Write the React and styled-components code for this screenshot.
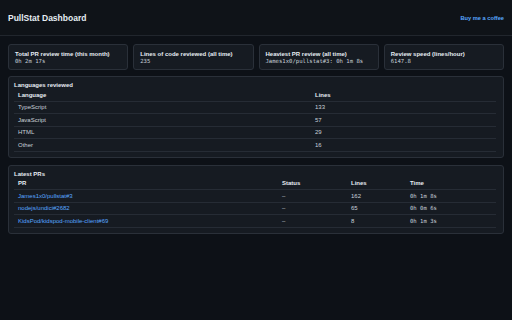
import React from 'react'
import styled, { createGlobalStyle } from 'styled-components'

const GlobalStyle = createGlobalStyle`
  html, body {
    margin: 0;
    padding: 0;
    background: #0d1117;
  }
  body {
    font-family: "Liberation Sans", Arial, sans-serif;
    color: #c9d1d9;
    width: 512px;
    height: 320px;
    overflow: hidden;
  }
`

const Header = styled.header`
  height: 35px;
  padding: 0 8px;
  display: flex;
  align-items: center;
  justify-content: space-between;
  border-bottom: 1px solid #21262d;
  background: #0f1318;
`

const Title = styled.h1`
  margin: 0;
  font-size: 8.5px;
  font-weight: 700;
  color: #e6edf3;
`

const CoffeeLink = styled.a`
  font-size: 5.7px;
  font-weight: 700;
  color: #58a6ff;
  text-decoration: none;
`

const Main = styled.main`
  padding: 8px;
  display: flex;
  flex-direction: column;
`

const Cards = styled.div`
  display: grid;
  grid-template-columns: repeat(4, 1fr);
  gap: 5px;
`

const Card = styled.div`
  background: #161b22;
  border: 1px solid #2a3039;
  border-radius: 3px;
  padding: 6px 6px 4px;
`

const CardLabel = styled.div`
  font-size: 6px;
  line-height: 7px;
  font-weight: 700;
  color: #e6edf3;
  white-space: nowrap;
`

const CardValue = styled.div`
  font-family: "DejaVu Sans Mono", "Liberation Mono", monospace;
  font-size: 5.6px;
  line-height: 7px;
  color: #c9d1d9;
  white-space: nowrap;
`

const Panel = styled.section`
  margin-top: ${p => p.$top}px;
  background: #161b22;
  border: 1px solid #2a3039;
  border-radius: 3px;
  padding: 4px 7px 5px 5px;
`

const PanelTitle = styled.h2`
  margin: 0;
  font-size: 6px;
  line-height: 8px;
  font-weight: 700;
  color: #e6edf3;
`

const Row = styled.div`
  display: grid;
  grid-template-columns: ${p => p.$cols};
  height: 12.5px;
  box-sizing: border-box;
  border-bottom: 1px solid #262c35;
  align-items: center;
  font-size: 6px;
  font-weight: ${p => (p.$head ? 700 : 400)};
  color: ${p => (p.$head ? '#e6edf3' : '#c9d1d9')};
`

const Cell = styled.div`
  padding-left: 4px;
  white-space: nowrap;
`

const MonoCell = styled(Cell)`
  font-family: "DejaVu Sans Mono", "Liberation Mono", monospace;
  font-size: 5.6px;
`

const PrLink = styled.a`
  color: #58a6ff;
  text-decoration: none;
`

const stats = [
  { label: 'Total PR review time (this month)', value: '0h 2m 17s' },
  { label: 'Lines of code reviewed (all time)', value: '235' },
  { label: 'Heaviest PR review (all time)', value: 'James1x0/pullstat#3: 0h 1m 8s' },
  { label: 'Review speed (lines/hour)', value: '6147.8' },
]

const languages = [
  ['TypeScript', 133],
  ['JavaScript', 57],
  ['HTML', 29],
  ['Other', 16],
]

const prs = [
  { name: 'James1x0/pullstat#3', lines: 162, time: '0h 1m 8s' },
  { name: 'nodejs/undici#2682', lines: 65, time: '0h 0m 6s' },
  { name: 'KidsPod/kidspod-mobile-client#69', lines: 8, time: '0h 1m 3s' },
]

const langCols = '297px 1fr'
const prCols = '264px 69px 59px 1fr'

export default function App() {
  return (
    <>
      <GlobalStyle />
      <Header>
        <Title>PullStat Dashboard</Title>
        <CoffeeLink href="#">Buy me a coffee</CoffeeLink>
      </Header>
      <Main>
        <Cards>
          {stats.map(s => (
            <Card key={s.label}>
              <CardLabel>{s.label}</CardLabel>
              <CardValue>{s.value}</CardValue>
            </Card>
          ))}
        </Cards>

        <Panel $top={6}>
          <PanelTitle>Languages reviewed</PanelTitle>
          <Row $cols={langCols} $head>
            <Cell>Language</Cell>
            <Cell>Lines</Cell>
          </Row>
          {languages.map(([lang, lines]) => (
            <Row $cols={langCols} key={lang}>
              <Cell>{lang}</Cell>
              <Cell>{lines}</Cell>
            </Row>
          ))}
        </Panel>

        <Panel $top={7}>
          <PanelTitle>Latest PRs</PanelTitle>
          <Row $cols={prCols} $head>
            <Cell>PR</Cell>
            <Cell>Status</Cell>
            <Cell>Lines</Cell>
            <Cell>Time</Cell>
          </Row>
          {prs.map(pr => (
            <Row $cols={prCols} key={pr.name}>
              <Cell><PrLink href="#">{pr.name}</PrLink></Cell>
              <Cell>–</Cell>
              <Cell>{pr.lines}</Cell>
              <MonoCell>{pr.time}</MonoCell>
            </Row>
          ))}
        </Panel>
      </Main>
    </>
  )
}
